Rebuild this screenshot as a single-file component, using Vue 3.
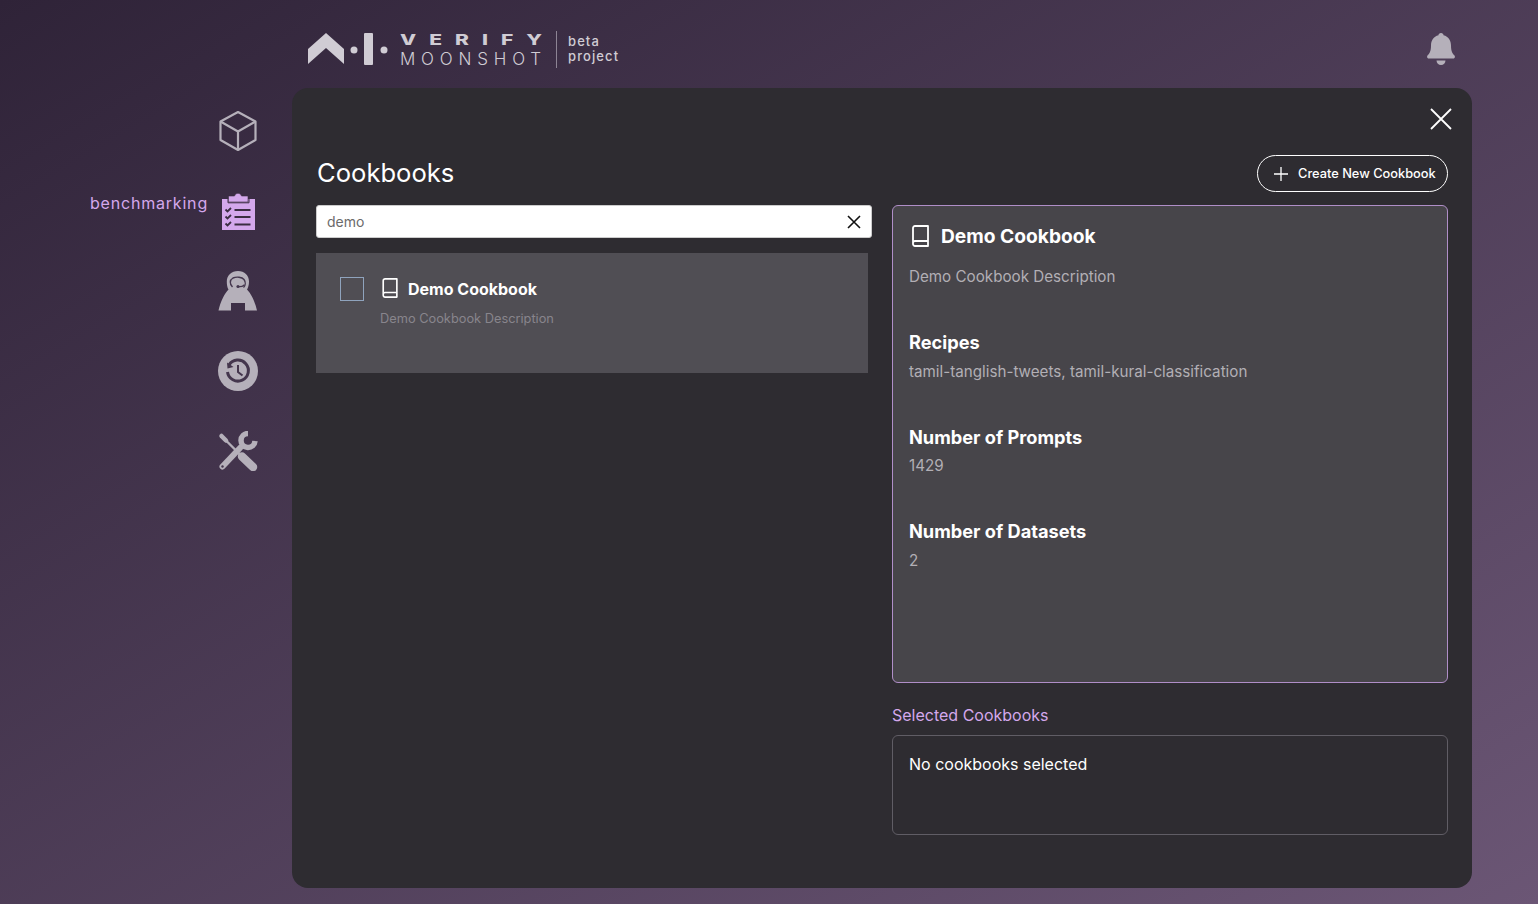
<script setup>
import { ref } from "vue";

const search = ref("demo");

const details = [
  { title: "Recipes", value: "tamil-tanglish-tweets, tamil-kural-classification" },
  { title: "Number of Prompts", value: "1429" },
  { title: "Number of Datasets", value: "2" },
];
</script>

<template>
  <div class="page">
    <aside class="sidebar">
      <div class="nav-item">
        <svg class="nav-icon" viewBox="0 0 40 40" fill="none" stroke="#b5b0ba" stroke-width="2.2" stroke-linejoin="round">
          <path d="M20 1 37.500 10.500v18.500L20 39 2.500 29V10.500Z" />
          <path d="M2.500 10.500 20 20.500 37.500 10.500M20 20.500V39" />
        </svg>
      </div>
      <div class="nav-item active">
        <span class="nav-label">benchmarking</span>
        <svg class="nav-icon" viewBox="0 0 40 40">
          <path fill="#d4a8ec" d="M4 8h33v31H4Z" />
          <path d="M10 8v3.800h21V8" fill="none" stroke="#3a2d41" stroke-width="1" />
          <path fill="#d4a8ec" stroke="#3a2d41" stroke-width=".6" d="M10.500 11V5h6a3.600 3.600 0 0 1 7 0h6.500v6Z" />
          <g fill="none" stroke="#3a2d41" stroke-width="1.800">
            <path d="M7.500 18.500l2 2 3.500-3.500M7.500 25.500l2 2 3.500-3.500M7.500 32.500l2 2 3.500-3.500" />
            <path d="M16.500 19h16M16.500 26h16M16.500 33.500h16" />
          </g>
        </svg>
      </div>
      <div class="nav-item">
        <svg class="nav-icon" viewBox="0 0 40 40">
          <path fill="#b5b0ba" d="M20 0c6.500 0 11 4.500 11 10.500 0 3.500-.8 6-2 8 4 4 8 12 10 21H27V32H13v7.500H.5c2-9 6-17 10-21-1.200-2-1.700-4.500-1.700-8C8.800 4.500 13.500 0 20 0Z" />
          <g fill="none" stroke="#44364d">
            <path d="M14.500 16c-3-3-3-7 .5-9 3.500-1.500 9-1 11 1.500 1.800 2.500 1.600 6-.5 8" stroke-width="1.400" />
            <path d="M20 15.500c2 .5 4.500 0 6.500-1.800" stroke-width="1.200" />
          </g>
          <circle cx="20" cy="15.500" r="1.600" fill="#44364d" />
        </svg>
      </div>
      <div class="nav-item">
        <svg class="nav-icon" viewBox="0 0 40 40">
          <circle cx="20" cy="20" r="20" fill="#b5b0ba" />
          <path d="M11 14A10.500 10.500 0 1 1 9.500 21" fill="none" stroke="#44364d" stroke-width="3" />
          <path d="M9 11.500 9.500 17.500 15.500 16Z" fill="#44364d" />
          <path d="M20 14v7l4.500 3.500" fill="none" stroke="#44364d" stroke-width="2" />
        </svg>
      </div>
      <div class="nav-item">
        <svg class="nav-icon" viewBox="0 0 40 40">
          <g fill="none" stroke="#b5b0ba" stroke-linecap="round">
            <path d="M3.500 5 8 9.500" stroke-width="4.500" />
            <path d="M8 9.500 24 25.500" stroke-width="2.400" stroke-linecap="butt" />
            <path d="M24 25.500 35 36" stroke-width="8.500" />
            <path d="M4.500 35.500 22 17" stroke-width="6" />
            <path d="M30 2.500A7 7 0 1 0 37 10" stroke-width="5.500" stroke-linecap="butt" />
          </g>
          <circle cx="4.500" cy="35.500" r="1.200" fill="#44364d" />
        </svg>
      </div>
    </aside>

    <div class="main">
      <header class="topbar">
        <div class="logo">
          <svg class="logo-mark" viewBox="0 0 80 32" fill="#d0ccd4">
            <path d="M0 16 18 0l18 16v15L18 15 0 31Z" />
            <circle cx="46" cy="17" r="3.500" />
            <rect x="56" y="0" width="9" height="32" rx="1" />
            <circle cx="76" cy="17" r="3.500" />
          </svg>
          <div class="logo-words">
            <span class="verify">VERIFY</span>
            <span class="moonshot">MOONSHOT</span>
          </div>
          <div class="beta">
            <span>beta</span>
            <span>project</span>
          </div>
        </div>
        <svg class="bell" viewBox="0 0 28 32" fill="#b5b0ba">
          <path d="M14 0c1.500 0 2.500 1 2.500 2.200C21.500 3.500 24 7.500 24 12.500c0 6 1.500 8 3.500 10 .8 1 .5 3-1.500 3H2c-2 0-2.300-2-1.500-3 2-2 3.500-4 3.500-10 0-5 2.500-9 7.500-10.300C11.500 1 12.500 0 14 0Z" />
          <path d="M9.500 27.500h9c0 2.500-2 4.500-4.500 4.500s-4.500-2-4.500-4.500Z" />
        </svg>
      </header>

      <main class="panel">
        <div class="close-row">
          <svg class="close" viewBox="0 0 22 22" fill="none" stroke="#fff" stroke-width="1.800">
            <path d="M1 1l20 20M21 1 1 21" />
          </svg>
        </div>
        <div class="title-row">
          <h1>Cookbooks</h1>
          <button class="create">
            <svg viewBox="0 0 14 14" fill="none" stroke="#fff" stroke-width="1.300"><path d="M7 0v14M0 7h14" /></svg>
            Create New Cookbook
          </button>
        </div>

        <div class="columns">
          <section class="left">
            <div class="search">
              <input v-model="search" />
              <svg viewBox="0 0 14 14" fill="none" stroke="#111" stroke-width="1.600"><path d="M1 1l12 12M13 1 1 13" /></svg>
            </div>
            <div class="card">
              <span class="checkbox"></span>
              <div>
                <div class="card-title">
                  <svg class="book small" viewBox="0 0 20 22" fill="none" stroke="#fff" stroke-width="1.800" stroke-linejoin="round">
                    <path d="M2 18V3a2 2 0 0 1 2-2h13v20H4a2 2 0 0 1-2-2v-1a2 2 0 0 1 2-2h13" />
                  </svg>
                  <span>Demo Cookbook</span>
                </div>
                <p>Demo Cookbook Description</p>
              </div>
            </div>
          </section>

          <section class="right">
            <div class="detail">
              <div class="detail-head">
                <svg class="book" viewBox="0 0 20 22" fill="none" stroke="#fff" stroke-width="1.800" stroke-linejoin="round">
                  <path d="M2 18V3a2 2 0 0 1 2-2h13v20H4a2 2 0 0 1-2-2v-1a2 2 0 0 1 2-2h13" />
                </svg>
                <h2>Demo Cookbook</h2>
              </div>
              <p class="detail-desc">Demo Cookbook Description</p>
              <div v-for="item in details" :key="item.title" class="detail-block">
                <h3>{{ item.title }}</h3>
                <p>{{ item.value }}</p>
              </div>
            </div>
            <h4>Selected Cookbooks</h4>
            <div class="selected">No cookbooks selected</div>
          </section>
        </div>
      </main>
    </div>
  </div>
</template>

<style>
html,
body {
  margin: 0;
  padding: 0;
}
</style>

<style scoped>
* {
  box-sizing: border-box;
}

.page {
  width: 1538px;
  height: 904px;
  display: flex;
  overflow: hidden;
  font-family: Inter, "Liberation Sans", sans-serif;
  background: linear-gradient(to bottom right, #2f2338, #6b5675);
}

.sidebar {
  width: 292px;
  padding-top: 91px;
  padding-right: 34px;
  flex-shrink: 0;
}

.nav-item {
  height: 80px;
  display: flex;
  align-items: center;
  justify-content: flex-end;
}

.nav-icon {
  width: 40px;
  height: 40px;
}

.nav-label {
  color: #d4a8ec;
  font-size: 16px;
  letter-spacing: 0.8px;
  margin-right: 10px;
  margin-bottom: 16px;
}

.main {
  width: 1180px;
}

.topbar {
  height: 88px;
  display: flex;
  align-items: center;
  justify-content: space-between;
  padding: 10px 17px 0 16px;
}

.logo {
  display: flex;
  align-items: center;
  color: #d0ccd4;
}

.logo-mark {
  width: 80px;
  height: 32px;
  margin-right: 12px;
}

.logo-words {
  display: flex;
  flex-direction: column;
  width: 157px;
  height: 37px;
  border-right: 1px solid #8d8494;
  justify-content: center;
  gap: 2px;
  padding-top: 3px;
}

.verify {
  display: inline-block;
  font-size: 15px;
  font-weight: 800;
  letter-spacing: 9.300px;
  line-height: 16px;
  white-space: nowrap;
  transform: scaleX(1.4);
  transform-origin: left center;
}

.moonshot {
  font-size: 17px;
  font-weight: 300;
  letter-spacing: 5.800px;
  line-height: 19px;
  white-space: nowrap;
}

.beta {
  display: flex;
  flex-direction: column;
  margin-left: 11px;
  font-size: 13px;
  font-weight: 500;
  letter-spacing: 1.100px;
  line-height: 15px;
}

.bell {
  width: 28px;
  height: 32px;
}

.panel {
  width: 1180px;
  height: 800px;
  border-radius: 16px;
  background: #2e2c31;
  padding: 20px 24px 0;
}

.close-row {
  display: flex;
  justify-content: flex-end;
  height: 47px;
  margin-right: -4px;
}

.close {
  width: 22px;
  height: 22px;
}

.title-row {
  display: flex;
  justify-content: space-between;
  align-items: center;
  height: 37px;
}

h1 {
  margin: 0 0 3px 1px;
  color: #fff;
  font-size: 25.600px;
  font-weight: 400;
}

.create {
  height: 37px;
  width: 191px;
  border: 1px solid #fff;
  border-radius: 19px;
  background: transparent;
  color: #fff;
  font-family: inherit;
  font-size: 12.800px;
  font-weight: 500;
  display: flex;
  align-items: center;
  gap: 10px;
  padding: 0 0 1px 16px;
}

.create svg {
  width: 14px;
  height: 14px;
  margin-top: 1px;
}

.columns {
  display: flex;
  gap: 20px;
  margin-top: 13px;
}

.left,
.right {
  width: 556px;
}

.search {
  height: 33px;
  background: #fff;
  border: 1px solid #ccc;
  border-radius: 3px;
  display: flex;
  align-items: center;
  padding: 0 10px;
}

.search input {
  flex: 1;
  border: 0;
  outline: 0;
  padding: 0;
  font-family: inherit;
  font-size: 14px;
  color: #6b6b6b;
  background: transparent;
}

.search svg {
  width: 14px;
  height: 14px;
}

.card {
  width: 552px;
  height: 120px;
  margin-top: 15px;
  background: #504e54;
  display: flex;
  padding: 24px;
  gap: 16px;
}

.checkbox {
  width: 24px;
  height: 24px;
  border: 1px solid #8fa3bd;
}

.card-title {
  display: flex;
  align-items: center;
  gap: 8px;
  height: 24px;
  color: #fff;
  font-size: 16px;
  font-weight: 700;
}

.card p {
  margin: 10px 0 0;
  color: #88858c;
  font-size: 12.800px;
}

.book {
  width: 20px;
  height: 22px;
}

.book.small {
  width: 19px;
  height: 20px;
  margin: -3px 0 0 1px;
}

.detail {
  height: 478px;
  background: #47454a;
  border: 1px solid #b08ec8;
  border-radius: 6px;
  padding: 17px 16px;
}

.detail-head {
  display: flex;
  align-items: center;
  gap: 10px;
  height: 26px;
  margin-left: 2px;
}

h2 {
  margin: 0;
  color: #fff;
  font-size: 19.200px;
  font-weight: 700;
}

.detail-desc {
  margin: 18px 0 0;
  color: #b2afb5;
  font-size: 15.200px;
}

.detail-block {
  margin-top: 45px;
}

.detail-block h3 {
  margin: 0;
  color: #fff;
  font-size: 18.200px;
  font-weight: 700;
  line-height: 22px;
}

.detail-block p {
  margin: 9.600px 0 0;
  color: #b2afb5;
  font-size: 15.200px;
  line-height: 18px;
}

h4 {
  margin: 22px 0 10px;
  color: #d4a8ec;
  font-size: 16px;
  font-weight: 400;
  line-height: 20px;
}

.selected {
  height: 100px;
  border: 1px solid #605d65;
  border-radius: 6px;
  padding: 18px 16px;
  color: #fff;
  font-size: 16px;
  font-weight: 400;
}
</style>
